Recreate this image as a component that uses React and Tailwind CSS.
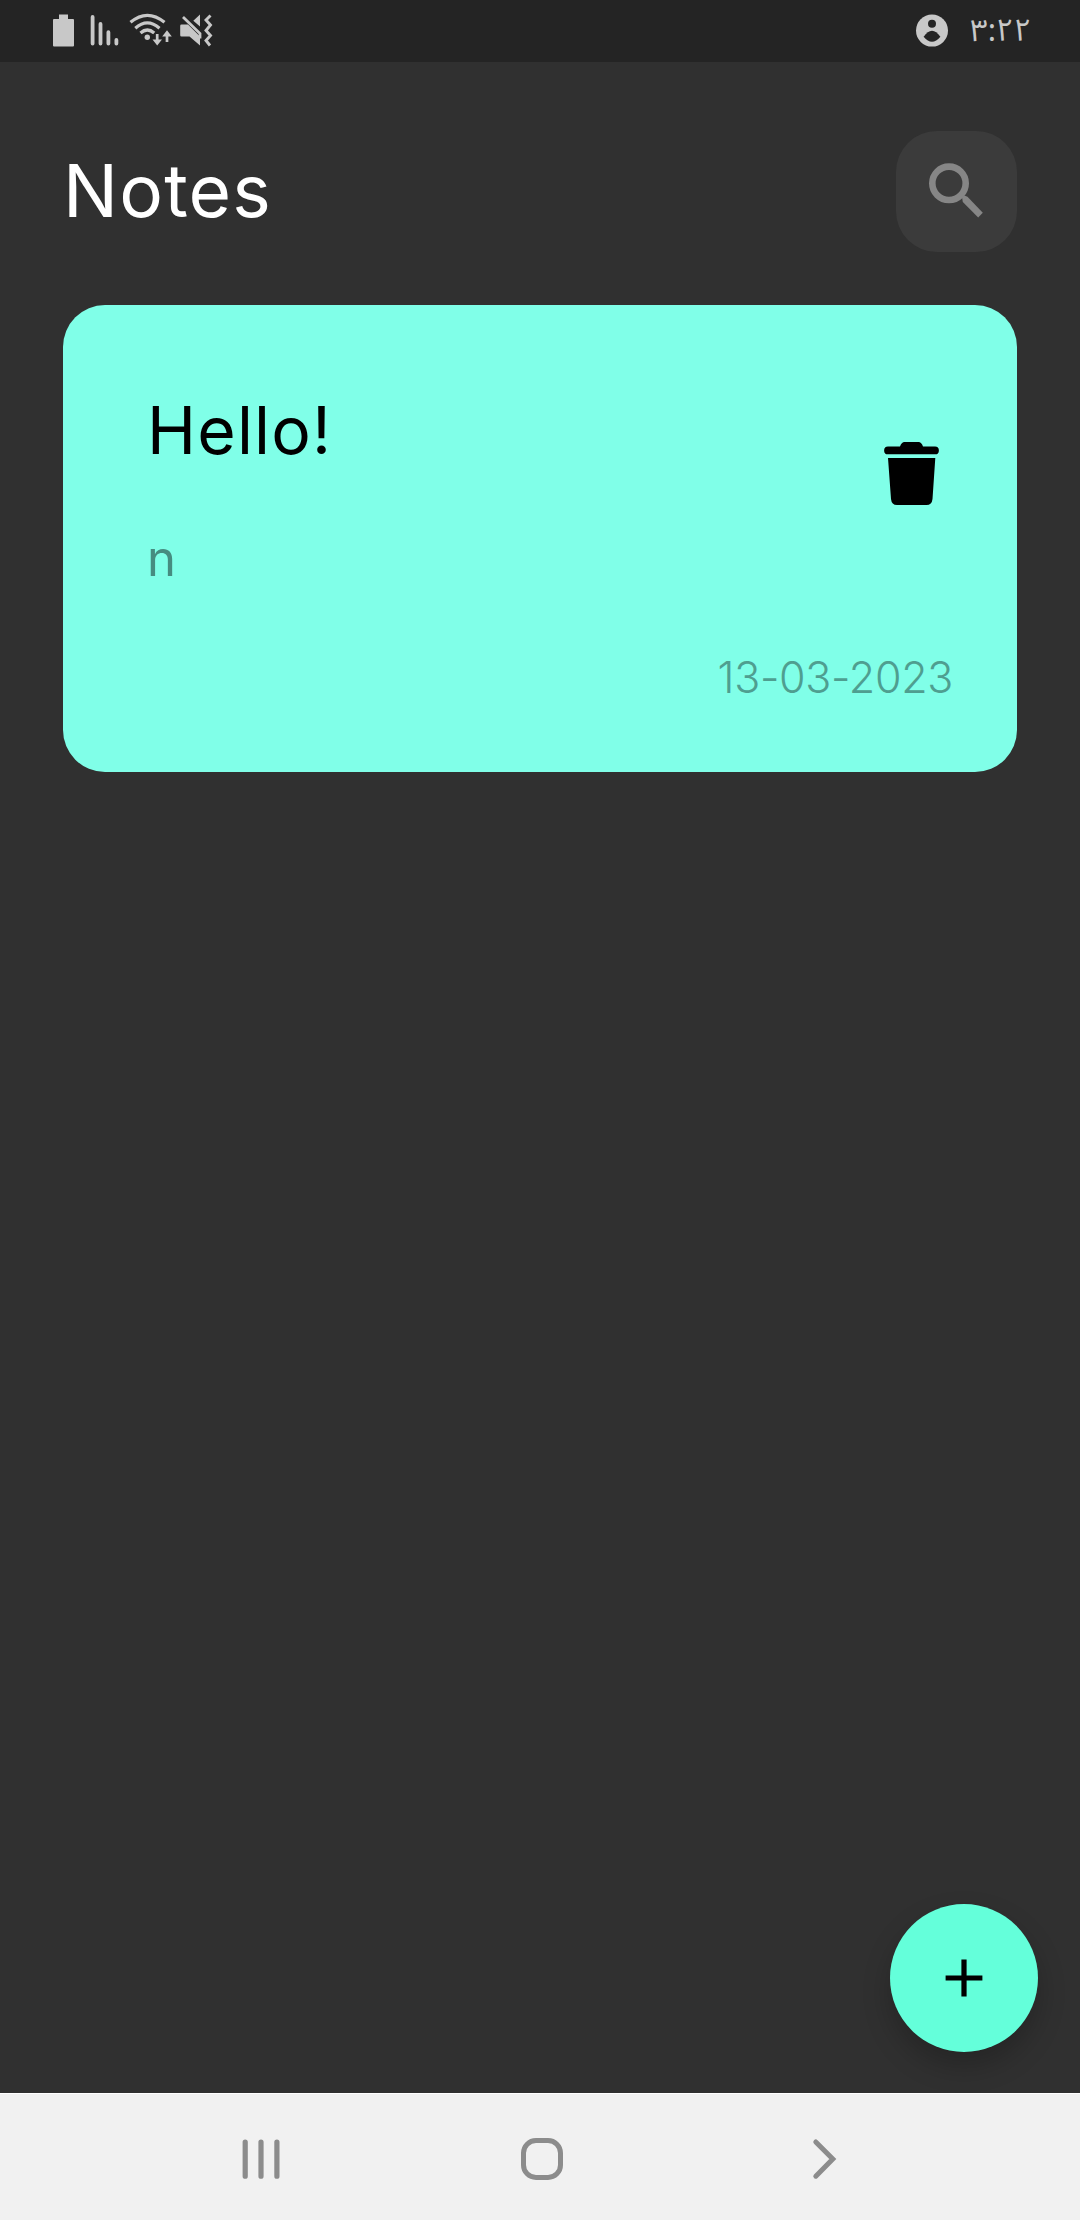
function StatusBar() {
  return (
    <div className="flex h-[62px] shrink-0 items-start justify-between bg-[#242424] pl-[52px] pr-[44px] text-[#c8c8c8]">
      <div className="flex items-start pt-[12px]">
        <svg width="24" height="36" viewBox="52 12 24 36" fill="currentColor">
          <path d="M59 14.5h9v4.5h5q1 0 1 1v25.500q0 1-1 1H54q-1 0-1-1V20q0-1 1-1h5z" />
        </svg>
        <svg className="ml-[13px]" width="32" height="36" viewBox="89 12 32 36" stroke="currentColor" strokeWidth="3.8" strokeLinecap="round">
          <path d="M92.600 17v26.500M100.500 24v19.500M108.400 32.200v11.300M116.400 40v3.500" />
        </svg>
        <svg className="ml-[8px]" width="46" height="36" viewBox="129 12 46 36" fill="none" stroke="currentColor" strokeWidth="3.2">
          <path d="M130.500 22.300Q147.300 8.300 164.500 22.300M135.300 28.200Q147.300 17.500 159.500 28.200M140.500 33Q147.300 27 154.200 33" />
          <circle cx="147.300" cy="37.300" r="2.700" fill="currentColor" stroke="none" />
          <path strokeWidth="2.700" d="M157.200 34v8M167 33.500v8.500" />
          <path fill="currentColor" stroke="none" d="M152.500 39.500h9.500L157.200 45.500zM162.200 36.500h9.600L167 30.300z" />
        </svg>
        <svg className="ml-[4px]" width="36" height="36" viewBox="179 12 36 36" fill="currentColor">
          <path d="M181.500 24.500h6.500l12 12v9l-10.500-9h-8q-1.300 0-1.300-1.300v-9.400q0-1.300 1.300-1.300zM193.300 20.800l6.700-6.300v12z" />
          <path d="M183 17l17 16.500v5" fill="none" stroke="currentColor" strokeWidth="2.800" />
          <path d="M210.500 15.500l-4.500 4.500 4.500 5-4.500 5.500 4.500 5-4.500 5 4 5" fill="none" stroke="currentColor" strokeWidth="2.900" />
        </svg>
      </div>
      <div className="flex items-start" dir="ltr">
        <svg className="mt-[14px]" width="34" height="34" viewBox="915 14 34 34">
          <circle cx="932" cy="30.600" r="16" fill="currentColor" />
          <circle cx="932" cy="23.800" r="4" fill="#242424" />
          <path d="M923.600 36.700q8.400-12 16.800 0q-8.400 10-16.800 0z" fill="#242424" />
        </svg>
        <span className="ml-[21px] block w-[66px] whitespace-nowrap font-['Noto_Sans_Arabic','Noto_Naskh_Arabic',sans-serif] text-[31px] leading-[62px] tracking-[-2.3px]">۳:۲۲</span>
      </div>
    </div>
  );
}

function Header() {
  return (
    <header className="mt-[69px] flex h-[121px] items-start justify-between pl-[63px] pr-[63px]">
      <h1 className="text-[73px] font-normal leading-[119px] tracking-[1.2px] text-white">Notes</h1>
      <button className="flex size-[121px] items-center justify-center rounded-[41px] bg-[#3b3b3b]" aria-label="Search">
        <svg width="121" height="121" viewBox="896 131 121 121" fill="none" stroke="#868686">
          <circle cx="949" cy="183.300" r="16.700" strokeWidth="6.600" />
          <path d="M962 197l2.500-1.500 3 1.200 15.300 16-4.600 4.700L962.800 202z" fill="#868686" stroke="none" />
        </svg>
      </button>
    </header>
  );
}

function NoteCard() {
  return (
    <article className="mx-[63px] mt-[53px] flex h-[467px] flex-col rounded-[42px] bg-[#80ffe8]">
      <div className="flex h-[330px] justify-between pl-[84px] pr-[74px]">
        <div>
          <h2 className="mt-[85px] text-[66px] font-normal leading-[80px] tracking-[1.2px] text-black">Hello!</h2>
          <p className="mt-[59px] text-[49px] leading-[60px] text-[#468c80]">n</p>
        </div>
        <svg className="mt-[134px]" width="62" height="70" viewBox="881 439 62 70" fill="black">
          <path d="M888 446.500h12q1.500-4.500 4.500-4.500h14q3 0 4.500 4.500h12a3.900 3.900 0 0 1 0 7.800H888a3.900 3.900 0 0 1 0-7.800zM888 458h47.300l-2.800 41q-.6 6-6 6h-29.500q-5.400 0-6-6z" />
        </svg>
      </div>
      <time className="mr-[64px] mt-[12px] self-end text-[43px] font-light leading-[60px] tracking-[-0.3px] text-[#4f9e90]">13-03-2023</time>
    </article>
  );
}

function NavBar() {
  return (
    <nav className="flex h-[127px] shrink-0 items-center justify-between border-t border-white bg-[#f1f1f1] pl-[237px] pr-[233px] pt-1 text-[#8c8c8c]">
      <svg width="48" height="48" viewBox="237 2135 48 48" stroke="currentColor" strokeWidth="5.200" strokeLinecap="round">
        <path d="M245.200 2142v34.200M261 2142v34.200M276.900 2142v34.200" />
      </svg>
      <svg width="48" height="48" viewBox="518 2135 48 48" fill="none" stroke="currentColor" strokeWidth="5">
        <rect x="523.500" y="2140.500" width="37" height="37" rx="12.500" />
      </svg>
      <svg width="48" height="48" viewBox="799 2135 48 48" fill="none" stroke="currentColor" strokeWidth="5" strokeLinecap="round">
        <path d="M815.800 2142l17 17-17 17.200" />
      </svg>
    </nav>
  );
}

export default function App() {
  return (
    <div className="flex h-[2220px] w-[1080px] flex-col overflow-hidden bg-[#303030] font-['Inter',sans-serif]">
      <StatusBar />
      <main className="flex flex-1 flex-col">
        <Header />
        <NoteCard />
        <button
          className="mb-[41px] mr-[42px] mt-auto flex size-[148px] items-center justify-center self-end rounded-full bg-[#64ffda] shadow-[0_14px_28px_rgba(0,0,0,0.22)]"
          aria-label="Add note"
        >
          <svg width="38" height="38" viewBox="0 0 38 38" stroke="black" strokeWidth="5.200">
            <path d="M19 .6v36.800M.6 19h36.800" />
          </svg>
        </button>
      </main>
      <NavBar />
    </div>
  );
}
